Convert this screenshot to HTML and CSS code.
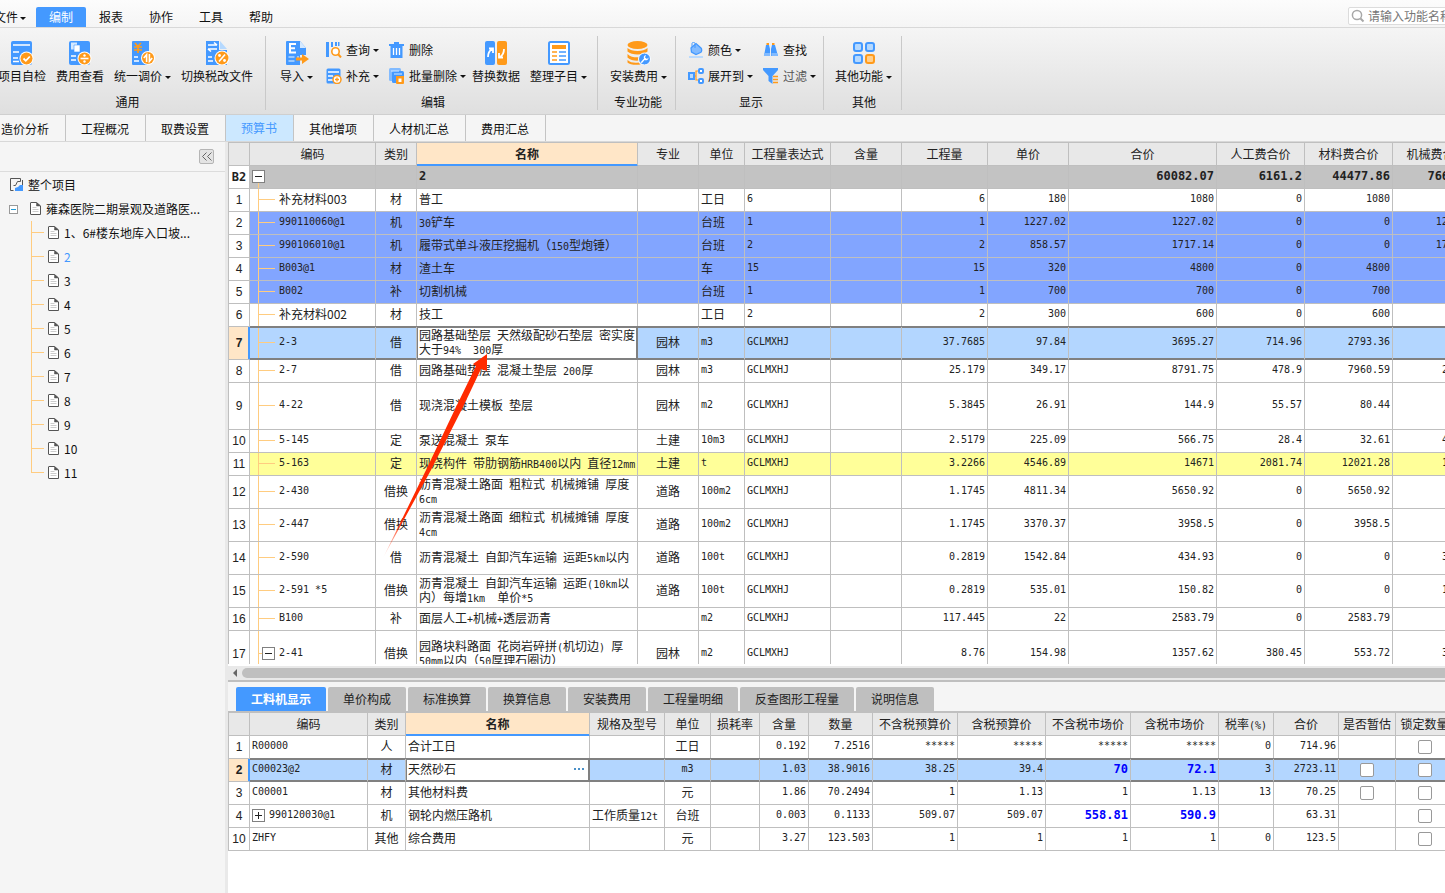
FILE: index.html
```
<!DOCTYPE html>
<html lang="zh-CN">
<head>
  <meta charset="UTF-8">
  <title>预算书</title>
  <link rel="stylesheet" href="styles.css">
</head>
<body>
  <nav class="menu">
    <button class="menu-item file">文件<i class="caret small"></i></button>
    <button class="menu-item active">编制</button>
    <button class="menu-item">报表</button>
    <button class="menu-item">协作</button>
    <button class="menu-item">工具</button>
    <button class="menu-item">帮助</button>
    <label class="search">
      <svg width="14" height="14" viewBox="0 0 14 14" fill="none" stroke="#a8a8a8" stroke-width="1.5"><circle cx="6" cy="6" r="4.6"/><path d="M9.5 9.5l3 3" stroke-width="2"/></svg>
      <input type="text" placeholder="请输入功能名称" aria-label="搜索功能">
    </label>
  </nav>

  <div class="ribbon">
    <section class="group group-common">
      <div class="tools">
        <button class="big">
          <svg width="24" height="24" viewBox="0 0 24 24"><rect x="1" width="21" height="24" rx="2" fill="#4499ff"/><path d="M3 4h17M3 11h6M3 17h5M3 20.5h6" stroke="#fff" stroke-width="1.6"/><circle cx="16.5" cy="17.5" r="7" fill="#fff"/><circle cx="16.5" cy="17.5" r="6" fill="#ff9a1a"/><path d="M13.5 17.5l2.3 2.3 4-4.3" fill="none" stroke="#fff" stroke-width="1.8"/></svg>
          <span>项目自检</span>
        </button>
        <button class="big">
          <svg width="24" height="24" viewBox="0 0 24 24"><rect x="1" width="21" height="24" rx="2" fill="#4499ff"/><path d="M3 1.500h6v7H3z" fill="#d5e9ff"/><path d="M6 4h6v7H6z" fill="#fff" stroke="#4499ff" stroke-width=".6"/><path d="M3 15h5M3 19h5" stroke="#fff" stroke-width="1.6"/><circle cx="16.5" cy="17.5" r="7" fill="#fff"/><circle cx="16.5" cy="17.5" r="6" fill="#ff9a1a"/><path d="M12.500 17.500h8" stroke="#fff" stroke-width="1.6"/><circle cx="16.5" cy="14.500" r="1.2" fill="#fff"/><circle cx="16.5" cy="20.5" r="1.2" fill="#fff"/></svg>
          <span>费用查看</span>
        </button>
        <button class="big">
          <svg width="24" height="24" viewBox="0 0 24 24"><path d="M2 0h16v24H2a1 1 0 0 1-1-1V1a1 1 0 0 1 1-1z" fill="#4499ff"/><path d="M4 2l2.800 3.500L10 2M3 6h8M3 9h8M7 5.500V12" fill="none" stroke="#ff9a1a" stroke-width="1.7"/><path d="M3 16h4M3 20h5" stroke="#fff" stroke-width="1.6"/><circle cx="17" cy="17" r="7" fill="#fff"/><circle cx="17" cy="17" r="6" fill="#ff9a1a"/><path d="M12.800 17l2.800-3.300V21M21.200 17l-2.800 3.300V13" fill="none" stroke="#fff" stroke-width="1.6"/></svg>
          <span>统一调价<i class="caret"></i></span>
        </button>
        <button class="big">
          <svg width="24" height="24" viewBox="0 0 24 24"><path d="M1 0h13v9h8v15H1z" fill="#4499ff"/><path d="M15 0l7 8h-7z" fill="#b5d9ff"/><path d="M3 4h9M9 1.500L12 4M12 8H3M6 10.500L3 8" fill="none" stroke="#fff" stroke-width="1.6"/><path d="M3 16h4M3 20h5" stroke="#fff" stroke-width="1.6"/><circle cx="17" cy="17" r="7.5" fill="#fff"/><circle cx="17" cy="17" r="6.5" fill="#ff9a1a"/><path d="M14 20.500l6-7" stroke="#fff" stroke-width="1.6"/><circle cx="14.5" cy="14.500" r="1.4" fill="#fff"/><circle cx="19.5" cy="19.5" r="1.4" fill="#fff"/></svg>
          <span>切换税改文件</span>
        </button>
      </div>
      <h3>通用</h3>
    </section>

    <section class="group group-edit">
      <div class="tools">
        <button class="big">
          <svg width="24" height="24" viewBox="0 0 24 24"><path d="M2 0h13l6 7v7h-6v10H2a1 1 0 0 1-1-1V1a1 1 0 0 1 1-1z" fill="#4499ff"/><path d="M15 0l6 7h-6z" fill="#d5e9ff"/><path d="M11 3H5v8.500h6M5 7.200h5" fill="none" stroke="#fff" stroke-width="2"/><path d="M3.500 16h6M3.500 20h6M12 16h2" stroke="#b5d9ff" stroke-width="1.6"/><path d="M11 16.500h6V13l7 5-7 5v-3.500h-6z" fill="#ff9a1a"/></svg>
          <span>导入<i class="caret"></i></span>
        </button>
        <div class="pair">
          <button class="line">
            <svg width="16" height="16" viewBox="0 0 16 16"><path d="M0 0h3v15H0zM5 0h2v5H5zM9 0h2v4H9zM12 0h1.500v4H12z" fill="#4499ff"/><circle cx="9.5" cy="9.5" r="3.7" fill="#fff" stroke="#ff9a1a" stroke-width="1.6"/><path d="M12 12l3 3.500" stroke="#ff9a1a" stroke-width="2"/></svg>
            查询<i class="caret"></i>
          </button>
          <button class="line">
            <svg width="16" height="16" viewBox="0 0 16 16"><rect x=".5" y=".5" width="14" height="15" rx="1.5" fill="#4499ff"/><path d="M2 4h11M2 8h5M2 12h5" stroke="#fff" stroke-width="1.6"/><circle cx="11" cy="11.5" r="4" fill="#fff" stroke="#ff9a1a" stroke-width="1.5"/><path d="M11 9.500v4M9 11.500h4" stroke="#ff9a1a" stroke-width="1.3"/></svg>
            补充<i class="caret"></i>
          </button>
        </div>
        <div class="pair">
          <button class="line">
            <svg width="16" height="16" viewBox="0 0 16 16"><path d="M5 0h5v2h5v2h-1.500v12h-12V4H0V2h5z" fill="#4499ff"/><path d="M4.500 6v7M7.500 6v7M10.500 6v7" stroke="#fff" stroke-width="1.3"/></svg>
            删除
          </button>
          <button class="line">
            <svg width="16" height="16" viewBox="0 0 16 16"><rect width="12" height="13" rx="1.5" fill="#82bbff"/><rect x="3" y="3" width="12" height="12" rx="1.5" fill="#4499ff"/><path d="M2 3h8M5 6h8" stroke="#d5e9ff"/><path d="M7 8h8v7a1 1 0 0 1-1 1H8a1 1 0 0 1-1-1z" fill="#ff9a1a"/><path d="M9.500 10.500h3v3.500h-3z" fill="#fff"/></svg>
            批量删除<i class="caret"></i>
          </button>
        </div>
        <button class="big">
          <svg width="24" height="24" viewBox="0 0 24 24"><rect x="1" width="10" height="24" rx="2" fill="#4499ff"/><rect x="13" width="10" height="24" rx="2" fill="#ff9a1a"/><path d="M4 16c0-4 1-6 4-8M5 7.500h4V12M20 8c0 4-1 6-4 8M19 16.500h-4V12" fill="none" stroke="#fff" stroke-width="1.8"/></svg>
          <span>替换数据</span>
        </button>
        <button class="big">
          <svg width="24" height="24" viewBox="0 0 24 24"><rect x="2" y="1" width="20" height="22" rx="1.5" fill="#fff" stroke="#4499ff" stroke-width="2"/><path d="M5 6h14" stroke="#ff9a1a" stroke-width="4"/><path d="M5 11h5M5 15h5M5 19h5" stroke="#ff9a1a" stroke-width="1.7"/><path d="M12 11h7M12 15h7M12 19h7" stroke="#4499ff" stroke-width="1.7"/></svg>
          <span>整理子目<i class="caret"></i></span>
        </button>
      </div>
      <h3>编辑</h3>
    </section>

    <section class="group group-pro">
      <div class="tools">
        <button class="big">
          <svg width="24" height="24" viewBox="0 0 24 24"><ellipse cx="10.5" cy="4" rx="10" ry="4" fill="#ff9a1a"/><path d="M.5 7c4 4 16 4 20 0v3.500c-4 4-16 4-20 0zM.5 13c4 4 10 3.500 12 3v3.500c-4 .5-9 0-12-3zM.5 19c3 3 8 3 11 2.500l2 2c-5 .8-11 .2-13-2z" fill="#ff9a1a"/><circle cx="17.5" cy="18" r="6" fill="#4499ff" stroke="#fff"/><path d="M13.500 21.500l3.500-4a2.700 2.700 0 0 1 2-3.500l-1 2.500 2 1.500 1.500-1.500a2.700 2.700 0 0 1-4 2.500L15 22z" fill="#fff"/></svg>
          <span>安装费用<i class="caret"></i></span>
        </button>
      </div>
      <h3>专业功能</h3>
    </section>

    <section class="group group-view">
      <div class="tools">
        <div class="pair">
          <button class="line">
            <svg width="16" height="16" viewBox="0 0 16 16"><path d="M3 6l5-4.500L13 6c1 1 1 4-.5 4.500L8 12.500 3.500 10z" fill="#82bbff" stroke="#4499ff" stroke-width="1.3"/><path d="M4 5V1.500C4 0 7 0 7 1.500V6" fill="none" stroke="#4499ff"/><path d="M1 15h14" stroke="#b5d9ff" stroke-width="1.8"/></svg>
            颜色<i class="caret"></i>
          </button>
          <button class="line">
            <svg width="16" height="16" viewBox="0 0 16 16"><path d="M6 8h2V3h3M8 8v4h3" fill="none" stroke="#ff9a1a" stroke-width="1.2"/><rect x="1" y="5" width="5" height="6" fill="#b5d9ff" stroke="#4499ff" stroke-width="2"/><rect x="11" y="1" width="4" height="4" rx="1" fill="#fff" stroke="#4499ff" stroke-width="2"/><rect x="11" y="11" width="4" height="4" rx="1" fill="#fff" stroke="#4499ff" stroke-width="2"/></svg>
            展开到<i class="caret"></i>
          </button>
        </div>
        <div class="pair">
          <button class="line">
            <svg width="16" height="16" viewBox="0 0 16 16"><path d="M3 3h3l1 4v7H1zM9 3h3l3 11H8V7z" fill="#4499ff"/><path d="M3.500 1h2.500v2h-2.500zM9 1h2.500v2H9z" fill="#ff9a1a"/><path d="M1.500 11H7v3H.8zM8.500 11H14l1 3H8.500z" fill="#82bbff"/></svg>
            查找
          </button>
          <button class="line soft">
            <svg width="16" height="16" viewBox="0 0 16 16"><path d="M0 0h15v2L9.500 8v8L5.500 13V8L0 2z" fill="#4499ff"/><path d="M10 8.500h5M10 11.500h5M10 14.500h5" stroke="#ff9a1a" stroke-width="1.5"/></svg>
            过滤<i class="caret"></i>
          </button>
        </div>
      </div>
      <h3>显示</h3>
    </section>

    <section class="group group-other">
      <div class="tools">
        <button class="big">
          <svg width="24" height="24" viewBox="0 0 24 24" fill="#b5d9ff" stroke="#4499ff" stroke-width="2"><rect x="2" y="2" width="8" height="8" rx="2"/><rect x="14" y="2" width="8" height="8" rx="2"/><rect x="2" y="14" width="8" height="8" rx="2"/><rect x="14" y="14" width="8" height="8" rx="2" fill="#ffd08f" stroke="#ff9a1a"/></svg>
          <span>其他功能<i class="caret"></i></span>
        </button>
      </div>
      <h3>其他</h3>
    </section>
  </div>

  <nav class="tabs">
    <button>造价分析</button>
    <button>工程概况</button>
    <button>取费设置</button>
    <button class="active">预算书</button>
    <button>其他增项</button>
    <button>人材机汇总</button>
    <button>费用汇总</button>
  </nav>

  <div class="main">
    <aside class="side">
      <div class="side-head">
        <button class="collapse" aria-label="收起"><svg width="10" height="9" viewBox="0 0 10 9" fill="none" stroke="#666"><path d="M4.500 0.500l-4 4 4 4M9.500 0.500l-4 4 4 4"/></svg></button>
      </div>
      <div class="root">
        <svg width="14" height="14" viewBox="0 0 14 14" fill="none" stroke="#555"><path d="M3.500 12.500H.5V.5h10v3h-3l-2 4h-2M12.500 2v5"/><path d="M5 13V10l3-1 2-2h3v6z" fill="#4499ff" stroke="none"/></svg>
        整个项目
      </div>
      <div class="project">
        <button class="tree-toggle" aria-label="折叠"></button>
        <svg class="doc" width="11" height="13"><use href="#doc"/></svg>
        雍森医院二期景观及道路医...
      </div>
      <ul class="tree">
        <li><svg class="doc" width="11" height="13"><use href="#doc"/></svg>1、6#楼东地库入口坡...</li>
        <li class="current"><svg class="doc" width="11" height="13"><use href="#doc"/></svg>2</li>
        <li><svg class="doc" width="11" height="13"><use href="#doc"/></svg>3</li>
        <li><svg class="doc" width="11" height="13"><use href="#doc"/></svg>4</li>
        <li><svg class="doc" width="11" height="13"><use href="#doc"/></svg>5</li>
        <li><svg class="doc" width="11" height="13"><use href="#doc"/></svg>6</li>
        <li><svg class="doc" width="11" height="13"><use href="#doc"/></svg>7</li>
        <li><svg class="doc" width="11" height="13"><use href="#doc"/></svg>8</li>
        <li><svg class="doc" width="11" height="13"><use href="#doc"/></svg>9</li>
        <li><svg class="doc" width="11" height="13"><use href="#doc"/></svg>10</li>
        <li><svg class="doc" width="11" height="13"><use href="#doc"/></svg>11</li>
      </ul>
      <svg class="defs" width="0" height="0">
        <symbol id="doc" viewBox="0 0 11 13"><path d="M1 .5h5.500l4 3.500v8.500H1a.5.5 0 0 1-.5-.5V1A.5.5 0 0 1 1 .5z" fill="#fff" stroke="#555"/><path d="M6.500.5V4h4z" fill="#555" stroke="#555" stroke-width=".5"/><path d="M2.500 5.500h4M2.500 7.500h6M2.500 9.500h6" stroke="#ccc"/></symbol>
      </svg>
    </aside>

    <div class="content">
      <div class="grid-wrap">
        <table class="grid budget">
          <thead>
            <tr><th></th><th>编码</th><th>类别</th><th class="focus">名称</th><th>专业</th><th>单位</th><th>工程量表达式</th><th>含量</th><th>工程量</th><th>单价</th><th>合价</th><th>人工费合价</th><th>材料费合价</th><th>机械费合价</th></tr>
          </thead>
          <tbody>
            <tr class="total"><td>B2</td><td><button class="toggle" aria-label="折叠"></button></td><td></td><td>2</td><td></td><td></td><td></td><td></td><td></td><td></td><td>60082.07</td><td>6161.2</td><td>44477.86</td><td>7669.26</td></tr>
            <tr><td>1</td><td class="cn">补充材料003</td><td>材</td><td>普工</td><td></td><td>工日</td><td>6</td><td></td><td>6</td><td>180</td><td>1080</td><td>0</td><td>1080</td><td>0</td></tr>
            <tr class="blue"><td>2</td><td>990110060@1</td><td>机</td><td><span class="en">30</span>铲车</td><td></td><td>台班</td><td>1</td><td></td><td>1</td><td>1227.02</td><td>1227.02</td><td>0</td><td>0</td><td>1227.02</td></tr>
            <tr class="blue"><td>3</td><td>990106010@1</td><td>机</td><td>履带式单斗液压挖掘机（<span class="en">150</span>型炮锤）</td><td></td><td>台班</td><td>2</td><td></td><td>2</td><td>858.57</td><td>1717.14</td><td>0</td><td>0</td><td>1717.14</td></tr>
            <tr class="blue"><td>4</td><td>B003@1</td><td>材</td><td>渣土车</td><td></td><td>车</td><td>15</td><td></td><td>15</td><td>320</td><td>4800</td><td>0</td><td>4800</td><td>0</td></tr>
            <tr class="blue"><td>5</td><td>B002</td><td>补</td><td>切割机械</td><td></td><td>台班</td><td>1</td><td></td><td>1</td><td>700</td><td>700</td><td>0</td><td>700</td><td>0</td></tr>
            <tr><td>6</td><td class="cn">补充材料002</td><td>材</td><td>技工</td><td></td><td>工日</td><td>2</td><td></td><td>2</td><td>300</td><td>600</td><td>0</td><td>600</td><td>0</td></tr>
            <tr class="selected mid"><td>7</td><td>2-3</td><td>借</td><td class="edit">园路基础垫层<span class="en"> </span>天然级配砂石垫层<span class="en"> </span>密实度<br>大于<span class="en">94%&nbsp; 300</span>厚</td><td>园林</td><td class="en">m3</td><td>GCLMXHJ</td><td></td><td>37.7685</td><td>97.84</td><td>3695.27</td><td>714.96</td><td>2793.36</td><td>0</td></tr>
            <tr><td>8</td><td>2-7</td><td>借</td><td>园路基础垫层<span class="en"> </span>混凝土垫层<span class="en"> 200</span>厚</td><td>园林</td><td class="en">m3</td><td>GCLMXHJ</td><td></td><td>25.179</td><td>349.17</td><td>8791.75</td><td>478.9</td><td>7960.59</td><td>252.62</td></tr>
            <tr class="tall"><td>9</td><td>4-22</td><td>借</td><td>现浇混凝土模板<span class="en"> </span>垫层</td><td>园林</td><td class="en">m2</td><td>GCLMXHJ</td><td></td><td>5.3845</td><td>26.91</td><td>144.9</td><td>55.57</td><td>80.44</td><td>8.89</td></tr>
            <tr><td>10</td><td>5-145</td><td>定</td><td>泵送混凝土<span class="en"> </span>泵车</td><td>土建</td><td class="en">10m3</td><td>GCLMXHJ</td><td></td><td>2.5179</td><td>225.09</td><td>566.75</td><td>28.4</td><td>32.61</td><td>481.37</td></tr>
            <tr class="yellow"><td>11</td><td>5-163</td><td>定</td><td>现浇构件<span class="en"> </span>带肋钢筋<span class="en">HRB400</span>以内<span class="en"> </span>直径<span class="en">12mm</span></td><td>土建</td><td class="en">t</td><td>GCLMXHJ</td><td></td><td>3.2266</td><td>4546.89</td><td>14671</td><td>2081.74</td><td>12021.28</td><td>126.84</td></tr>
            <tr class="mid"><td>12</td><td>2-430</td><td>借换</td><td>沥青混凝土路面<span class="en"> </span>粗粒式<span class="en"> </span>机械摊铺<span class="en"> </span>厚度<br><span class="en">6cm</span></td><td>道路</td><td class="en">100m2</td><td>GCLMXHJ</td><td></td><td>1.1745</td><td>4811.34</td><td>5650.92</td><td>0</td><td>5650.92</td><td>0</td></tr>
            <tr class="mid"><td>13</td><td>2-447</td><td>借换</td><td>沥青混凝土路面<span class="en"> </span>细粒式<span class="en"> </span>机械摊铺<span class="en"> </span>厚度<br><span class="en">4cm</span></td><td>道路</td><td class="en">100m2</td><td>GCLMXHJ</td><td></td><td>1.1745</td><td>3370.37</td><td>3958.5</td><td>0</td><td>3958.5</td><td>0</td></tr>
            <tr class="mid"><td>14</td><td>2-590</td><td>借</td><td>沥青混凝土<span class="en"> </span>自卸汽车运输<span class="en"> </span>运距<span class="en">5km</span>以内</td><td>道路</td><td class="en">100t</td><td>GCLMXHJ</td><td></td><td>0.2819</td><td>1542.84</td><td>434.93</td><td>0</td><td>0</td><td>372.24</td></tr>
            <tr class="mid"><td>15</td><td>2-591 *5</td><td>借换</td><td>沥青混凝土<span class="en"> </span>自卸汽车运输<span class="en"> </span>运距<span class="en">(10km</span>以<br>内）每增<span class="en">1km&nbsp; </span>单价<span class="en">*5</span></td><td>道路</td><td class="en">100t</td><td>GCLMXHJ</td><td></td><td>0.2819</td><td>535.01</td><td>150.82</td><td>0</td><td>0</td><td>129.08</td></tr>
            <tr><td>16</td><td>B100</td><td>补</td><td>面层人工<span class="en">+</span>机械<span class="en">+</span>透层沥青</td><td></td><td class="en">m2</td><td>GCLMXHJ</td><td></td><td>117.445</td><td>22</td><td>2583.79</td><td>0</td><td>2583.79</td><td>0</td></tr>
            <tr class="tall parent"><td>17</td><td><button class="toggle" aria-label="折叠"></button>2-41</td><td>借换</td><td>园路块料路面<span class="en"> </span>花岗岩碎拼<span class="en">(</span>机切边<span class="en">) </span>厚<br><span class="en">50mm</span>以内（<span class="en">50</span>厚理石圈边）</td><td>园林</td><td class="en">m2</td><td>GCLMXHJ</td><td></td><td>8.76</td><td>154.98</td><td>1357.62</td><td>380.45</td><td>553.72</td><td>316.24</td></tr>
          </tbody>
        </table>
      </div>

      <div class="hscroll"><i class="arrow-left"></i><div class="thumb"></div></div>

      <div class="detail">
        <nav class="subtabs">
          <button class="active">工料机显示</button>
          <button>单价构成</button>
          <button>标准换算</button>
          <button>换算信息</button>
          <button>安装费用</button>
          <button>工程量明细</button>
          <button>反查图形工程量</button>
          <button>说明信息</button>
        </nav>
        <div class="detail-body">
          <table class="grid resources">
            <thead>
              <tr><th></th><th>编码</th><th>类别</th><th class="focus">名称</th><th>规格及型号</th><th>单位</th><th>损耗率</th><th>含量</th><th>数量</th><th>不含税预算价</th><th>含税预算价</th><th>不含税市场价</th><th>含税市场价</th><th>税率<span class="en">(%)</span></th><th>合价</th><th>是否暂估</th><th>锁定数量</th></tr>
            </thead>
            <tbody>
              <tr><td>1</td><td>R00000</td><td>人</td><td>合计工日</td><td></td><td>工日</td><td></td><td>0.192</td><td>7.2516</td><td>*****</td><td>*****</td><td>*****</td><td>*****</td><td>0</td><td>714.96</td><td></td><td><input type="checkbox" aria-label="锁定数量"></td></tr>
              <tr class="selected"><td>2</td><td>C00023@2</td><td>材</td><td class="edit"><div class="edit-row">天然砂石<button class="more" aria-label="更多"><i></i><i></i><i></i></button></div></td><td></td><td class="en">m3</td><td></td><td>1.03</td><td>38.9016</td><td>38.25</td><td>39.4</td><td class="changed">70</td><td class="changed">72.1</td><td>3</td><td>2723.11</td><td><input type="checkbox" aria-label="是否暂估"></td><td><input type="checkbox" aria-label="锁定数量"></td></tr>
              <tr><td>3</td><td>C00001</td><td>材</td><td>其他材料费</td><td></td><td>元</td><td></td><td>1.86</td><td>70.2494</td><td>1</td><td>1.13</td><td>1</td><td>1.13</td><td>13</td><td>70.25</td><td><input type="checkbox" aria-label="是否暂估"></td><td><input type="checkbox" aria-label="锁定数量"></td></tr>
              <tr><td>4</td><td><button class="toggle plus" aria-label="展开"></button>990120030@1</td><td>机</td><td>钢轮内燃压路机</td><td>工作质量<span class="en">12t</span></td><td>台班</td><td></td><td>0.003</td><td>0.1133</td><td>509.07</td><td>509.07</td><td class="changed">558.81</td><td class="changed">590.9</td><td></td><td>63.31</td><td></td><td><input type="checkbox" aria-label="锁定数量"></td></tr>
              <tr><td>10</td><td>ZHFY</td><td>其他</td><td>综合费用</td><td></td><td>元</td><td></td><td>3.27</td><td>123.503</td><td>1</td><td>1</td><td>1</td><td>1</td><td>0</td><td>123.5</td><td></td><td><input type="checkbox" aria-label="锁定数量"></td></tr>
            </tbody>
          </table>
        </div>
      </div>
    </div>
  </div>

  <!-- red pointer over the grid -->
  <svg class="pointer" width="104" height="204" viewBox="0 0 104 204">
    <defs><linearGradient id="tail" x1="0" y1="1" x2=".2" y2=".8"><stop offset="0" stop-color="#ff2a00" stop-opacity="0"/><stop offset="1" stop-color="#ff2a00"/></linearGradient></defs>
    <path d="M104 0L104 17 98 15 80 53 48 116 0 204 44 114 73 53 93 12 90 10z" fill="url(#tail)"/>
  </svg>
</body>
</html>
```
FILE: styles.css
```
* {
  box-sizing: border-box;
}
body {
  margin: 0;
  height: 100vh;
  overflow: hidden;
  display: flex;
  flex-direction: column;
  font: 12px/16px "Noto Sans CJK SC", sans-serif;
  color: #111;
  background: #f5f5f5;
}
button {
  font: inherit;
  color: inherit;
  background: none;
  border: 0;
  padding: 0;
  white-space: nowrap;
}
.caret {
  display: inline-block;
  border: 3px solid transparent;
  border-top-color: #111;
  border-bottom: 0;
  margin-left: 3px;
  vertical-align: 2px;
}
.caret.small {
  margin-left: 2px;
}

/* menu */
.menu {
  display: flex;
  height: 28px;
  padding-top: 7px;
  background: linear-gradient(#fcfcfc, #f5f5f5);
  border-bottom: 1px solid #d8d8d8;
}
.menu-item {
  width: 50px;
  flex: none;
}
.menu-item.file {
  width: 42px;
  margin-left: -6px;
  text-align: left;
}
.menu-item.active {
  background: #4499ff;
  color: #fff;
  border-radius: 2px 2px 0 0;
}
.search {
  display: flex;
  align-items: center;
  flex: none;
  width: 130px;
  height: 18px;
  margin: 0 -33px 0 auto;
  padding: 0 2px;
  gap: 3px;
  background: #fff;
  border: 1px solid #dcdcdc;
  border-radius: 2px;
}
.search input {
  width: 100px;
  border: 0;
  padding: 0;
  outline: 0;
  background: none;
  font: inherit;
}
.search input::placeholder {
  color: #777;
}

/* ribbon */
.ribbon {
  display: flex;
  height: 87px;
  padding: 8px 0 4px;
  background: linear-gradient(#f5f5f5, #dfdfdf);
  border-bottom: 1px solid #cfcfcf;
}
.group {
  display: flex;
  flex-direction: column;
  justify-content: space-between;
  flex: none;
  border-right: 1px solid #c9c9c9;
}
.group h3 {
  margin: 0;
  padding-left: 3px;
  font-size: 12px;
  font-weight: normal;
  text-align: center;
}
.tools {
  display: flex;
  gap: 10px;
  padding-top: 5px;
}
.group-common {
  width: 268px;
  margin-left: -2px;
}
.group-common h3 {
  padding: 0 8px 0 0;
}
.group-edit {
  width: 332px;
}
.group-edit .tools {
  padding-left: 14px;
}
.group-edit .tools .big:first-child {
  margin-right: 3px;
}
.group-edit .tools .big:nth-last-child(2) {
  margin-left: -4px;
}
.group-pro {
  width: 78px;
}
.group-pro .tools {
  padding-left: 12px;
}
.group-view {
  width: 148px;
}
.group-view .tools {
  padding-left: 12px;
}
.group-other .tools {
  padding: 5px 9px 0 11px;
}
.big {
  display: flex;
  flex-direction: column;
  align-items: center;
  gap: 3px;
}
.big svg,
.line svg {
  display: block;
  flex: none;
}
.pair {
  display: flex;
  flex-direction: column;
  align-items: flex-start;
  gap: 10px;
  padding-top: 1px;
}
.line {
  display: flex;
  align-items: center;
  height: 16px;
}
.line svg {
  margin-right: 4px;
}
.line.soft {
  color: #555;
}

/* page tabs */
.tabs {
  display: flex;
  height: 27px;
  margin-left: -14px;
  border-bottom: 1px solid #d8d8d8;
}
.tabs button {
  padding: 2px 16px 0 15px;
  border-right: 1px solid #c4c4c4;
}
.tabs .active {
  background: #cce8ff;
  color: #4499ff;
  padding-top: 0;
}

.main {
  flex: 1;
  display: flex;
  min-height: 0;
}

/* project tree */
.side {
  width: 228px;
  flex: none;
  border-right: 3px solid #e9e9e9;
}
.side-head {
  display: flex;
  justify-content: flex-end;
  height: 30px;
  padding: 7px 11px 0 0;
  border-bottom: 1px solid #dcdcdc;
}
.collapse {
  display: flex;
  align-items: center;
  justify-content: center;
  width: 15px;
  height: 15px;
  background: #e4e4e4;
  border: 1px solid #b5b5b5;
  border-radius: 2px;
}
.root,
.project {
  display: flex;
  align-items: center;
  height: 24px;
  white-space: nowrap;
}
.root {
  margin-top: 1px;
  padding-left: 10px;
  gap: 4px;
}
.project {
  padding-left: 9px;
}
.tree-toggle {
  width: 9px;
  height: 9px;
  margin-right: 12px;
  border: 1px solid #999;
  background: linear-gradient(#1e9bd7, #1e9bd7) center / 5px 1px no-repeat #fff;
}
.doc {
  margin: 0 5px 2px 0;
  flex: none;
}
.tree {
  list-style: none;
  margin: 0 0 0 31px;
  padding: 0;
}
.tree li {
  display: flex;
  align-items: center;
  height: 24px;
  padding-left: 17px;
  white-space: nowrap;
  background:
    linear-gradient(#ffcc80, #ffcc80) 0 0 / 1px 100% no-repeat,
    linear-gradient(#ffcc80, #ffcc80) 0 11px / 13px 1px no-repeat;
}
.tree li:last-child {
  background-size: 1px 12px, 13px 1px;
}
.tree .current {
  color: #4499ff;
}
.defs {
  display: block;
}

/* grids */
.content {
  flex: 1;
  min-width: 0;
  display: flex;
  flex-direction: column;
  background: #fff;
}
.grid-wrap {
  flex: 1;
  min-height: 0;
  overflow: hidden;
  border-bottom: 2px solid #fff;
}
.grid {
  width: 100%;
  table-layout: fixed;
  border-collapse: separate;
  border-spacing: 0;
  line-height: 14px;
  color: #222;
}
.budget {
  min-width: 1253px;
}
.resources {
  min-width: 1226px;
}
.grid th,
.grid td {
  height: 23px;
  padding: 0 2px;
  border-right: 1px solid #bfbfbf;
  border-bottom: 1px solid #bfbfbf;
  white-space: nowrap;
  overflow: hidden;
  text-align: center;
}
.grid td {
  padding: 0 2px 2px;
}
.grid th {
  height: 24px;
  padding: 0;
  font-weight: normal;
  background: #e8e8e8;
  border-top: 1px solid #bfbfbf;
}
.grid th:first-child,
.grid td:first-child {
  border-left: 1px solid #bfbfbf;
  padding: 0;
  font-family: "Liberation Sans", sans-serif;
}
.grid th.focus {
  background: #ffe6c7;
  font-weight: bold;
  border-bottom-color: #4499ff;
  box-shadow: inset 0 -1px #4499ff;
}
.en,
.grid td:nth-child(2),
.budget td:nth-child(n+7),
.resources td:nth-child(n+7) {
  font-family: "DejaVu Sans Mono", monospace;
  font-size: 10px;
}
span.en {
  line-height: 10px;
}
.grid td:nth-child(2),
.grid td:nth-child(4),
.resources td:nth-child(5),
.budget td:nth-child(6),
.budget td:nth-child(7) {
  text-align: left;
}
.budget td:nth-child(n+8),
.resources td:nth-child(n+7) {
  text-align: right;
}
.resources td:nth-child(n+16) {
  text-align: center;
}
.grid tr.mid td {
  height: 33px;
}
.grid tr.tall td {
  height: 47px;
}
.blue td:nth-child(n+2) {
  background-color: #82a5ff;
}
.yellow td:nth-child(n+2) {
  background-color: #ffff99;
}
.grid .total td {
  font-family: "DejaVu Sans Mono", "Noto Sans CJK SC", monospace;
  font-size: 12px;
  font-weight: bold;
}
.total td:nth-child(n+2) {
  background-color: #c3c3c3;
}
.selected td {
  background-color: #b3d6ff;
  border-bottom-color: #808080;
  box-shadow: 0 -1px #808080, inset 0 1px #808080, inset 0 -1px #808080;
}
.grid .selected td:first-child {
  background: #ffe6c7;
  font-weight: bold;
  border-right-color: #4499ff;
  border-bottom-color: #bfbfbf;
  box-shadow: inset -1px 0 #4499ff;
}
.selected td.edit {
  background: #fff;
  border-right-color: #808080;
  box-shadow: 0 -1px #808080, inset 0 0 0 1px #808080;
}
.grid td.changed {
  color: #0000ff;
  font-size: 12px;
  font-weight: bold;
}

/* tree lines inside the code column */
.budget td:nth-child(2) {
  padding-left: 29px;
  background-image: linear-gradient(#ffcc80, #ffcc80), linear-gradient(#ffcc80, #ffcc80);
  background-position: 8px 0, 9px 10px;
  background-size: 1px 100%, 16px 1px;
  background-repeat: no-repeat;
}
.budget .mid td:nth-child(2) {
  background-position: 8px 0, 9px 15px;
}
.budget .tall td:nth-child(2) {
  background-position: 8px 0, 9px 22px;
}
.budget .total td:nth-child(2) {
  padding-left: 2px;
  background-position: 8px 100%, 0 0;
  background-size: 1px 5px, 0 0;
}
.budget .parent td:nth-child(2) {
  padding-left: 12px;
}
.budget td.cn {
  font-family: inherit;
  font-size: 12px;
}
.toggle {
  width: 13px;
  height: 13px;
  margin-right: 4px;
  vertical-align: middle;
  border: 1px solid #808080;
  background: linear-gradient(#222, #222) center / 7px 1px no-repeat #fff;
}
.toggle.plus {
  background:
    linear-gradient(#222, #222) center / 7px 1px no-repeat,
    linear-gradient(#222, #222) center / 1px 7px no-repeat #fff;
}

.budget th:nth-child(1) { width: 22px; }
.budget th:nth-child(2) { width: 126px; }
.budget th:nth-child(3) { width: 41px; }
.budget th:nth-child(4) { width: 221px; }
.budget th:nth-child(5) { width: 61px; }
.budget th:nth-child(6) { width: 46px; }
.budget th:nth-child(7) { width: 86px; }
.budget th:nth-child(8) { width: 71px; }
.budget th:nth-child(9) { width: 86px; }
.budget th:nth-child(10) { width: 81px; }
.budget th:nth-child(11) { width: 148px; }
.budget th:nth-child(n+12) { width: 88px; }

.resources th:nth-child(1) { width: 22px; }
.resources th:nth-child(2) { width: 118px; }
.resources th:nth-child(3) { width: 38px; }
.resources th:nth-child(4) { width: 184px; }
.resources th:nth-child(5) { width: 75px; }
.resources th:nth-child(6) { width: 46px; }
.resources th:nth-child(7) { width: 49px; }
.resources th:nth-child(8) { width: 49px; }
.resources th:nth-child(9) { width: 64px; }
.resources th:nth-child(10) { width: 85px; }
.resources th:nth-child(11) { width: 88px; }
.resources th:nth-child(12) { width: 85px; }
.resources th:nth-child(13) { width: 88px; }
.resources th:nth-child(14) { width: 55px; }
.resources th:nth-child(15) { width: 65px; }
.resources th:nth-child(16) { width: 57px; }
.resources th:nth-child(17) { width: 58px; }

.hscroll {
  display: flex;
  align-items: center;
  height: 16px;
  padding-left: 5px;
  gap: 5px;
  background: #e9e9e9;
  border-bottom: 2px solid #bfbfbf;
}
.arrow-left {
  border: 4px solid transparent;
  border-right-color: #666;
  border-left: 0;
}
.thumb {
  flex: 1;
  height: 10px;
  background: #bfbfbf;
  border-radius: 5px 0 0 5px;
}

/* lower panel */
.detail {
  height: 211px;
  display: flex;
  flex-direction: column;
}
.subtabs {
  display: flex;
  gap: 2px;
  height: 30px;
  padding: 5px 0 0 8px;
  background: #f5f5f5;
  border-bottom: 1px solid #bfbfbf;
}
.subtabs button {
  padding: 0 15px;
  background: #bfbfbf;
  border-radius: 2px 2px 0 0;
  color: #222;
}
.subtabs .active {
  background: #4499ff;
  color: #fff;
  font-weight: bold;
}
.detail-body {
  flex: 1;
  overflow: hidden;
}
.edit-row {
  display: flex;
  justify-content: space-between;
  align-items: center;
}
.more {
  display: flex;
  gap: 2px;
  margin-right: 3px;
}
.more i {
  width: 2px;
  height: 2px;
  background: #4a90c8;
}
.grid input {
  appearance: none;
  display: block;
  width: 14px;
  height: 14px;
  margin: 2px auto 0;
  background: #fff;
  border: 1px solid #999;
  border-radius: 2px;
}

.pointer {
  position: absolute;
  left: 383px;
  top: 354px;
  pointer-events: none;
}
```
